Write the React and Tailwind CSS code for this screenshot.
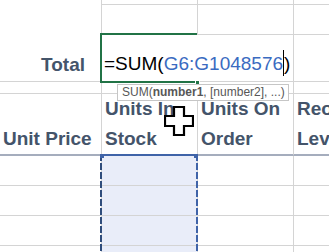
import React from "react";

const GRID = "border-r border-b border-[#d4d4d4]";
const HEAD = "border-r border-b-2 border-r-[#d4d4d4] border-b-[#a5adbd]";

const Cursor = () => (
  // fat white cross that Excel shows over cells
  <svg className="absolute left-[164px] top-[106px]" width="30" height="30" viewBox="0 0 30 30">
    <path
      d="M10 1H20V10H29V20H20V29H10V20H1V10H10Z"
      fill="#fff"
      stroke="#000"
      strokeWidth="2.2"
      strokeLinejoin="miter"
    />
  </svg>
);

const Marquee = () => (
  // dashed copy/reference outline around column G
  <svg className="absolute left-[100px] top-[154px]" width="98" height="100">
    <line x1="0" y1="1" x2="98" y2="1" stroke="#3f63a8" strokeWidth="2" />
    <line x1="1" y1="0" x2="1" y2="100" stroke="#2f4d7c" strokeWidth="2" strokeDasharray="7 2" />
    <line x1="97" y1="0" x2="97" y2="100" stroke="#3f63a8" strokeWidth="2" strokeDasharray="7 2" />
    <rect x="0" y="0" width="4" height="4" fill="#3f63a8" />
    <rect x="94" y="0" width="4" height="4" fill="#3f63a8" />
  </svg>
);

const App = () => {
  const headers = [
    { text: "Unit Price", cls: "justify-end" },
    { text: "Units In Stock", cls: "" },
    { text: "Units On Order", cls: "" },
    { text: "Reorder Level", cls: "" },
  ];

  return (
    <div
      className="relative w-[329px] h-[252px] overflow-hidden bg-white text-[#44546a]"
      style={{ fontFamily: '"Liberation Sans", Arial, sans-serif' }}
    >
      <div className="grid grid-cols-[102px_96px_96px_96px] grid-rows-[5px_30px_47px_12px_62px_30px_30px_30px_30px]">
        {/* top rows */}
        <div className={`row-span-3 ${GRID} flex items-end justify-end pb-[5px] pr-[16px]`}>
          <span className="text-[19px] leading-[22px] font-bold">Total</span>
        </div>
        <div className={GRID} />
        <div className={GRID} />
        <div className={GRID} />
        <div className={GRID} />
        <div className={GRID} />
        <div className={GRID} />

        {/* formula row */}
        <div className={`col-span-2 ${GRID} flex items-end pb-[5px] pl-[2px] whitespace-nowrap`}>
          <span className="text-[19px] leading-[22px] text-black">
            =SUM(<span className="text-[#3a6bc1]">G6:G1048576</span>
            <span className="inline-block w-px h-[26px] bg-black align-[-6px]" />)
          </span>
        </div>
        <div className={GRID} />

        {/* spacer row */}
        <div className={GRID} />
        <div className={GRID} />
        <div className={GRID} />
        <div className={GRID} />

        {/* header row */}
        {headers.map((h) => (
          <div key={h.text} className={`${HEAD} flex flex-col ${h.cls} px-[3px] overflow-hidden`}>
            <span className="text-[19px] leading-[30px] font-bold whitespace-normal w-[140px]">
              {h.text === "Reorder Level" ? (
                <>
                  Reorder
                  <br />
                  Level
                </>
              ) : h.text === "Unit Price" ? (
                "Unit Price"
              ) : (
                <span className="block w-[90px]">{h.text}</span>
              )}
            </span>
          </div>
        ))}

        {/* data rows */}
        {[0, 1, 2, 3].map((r) => (
          <React.Fragment key={r}>
            <div className={GRID} />
            <div className={`${GRID} bg-[#e9edf9]`} />
            <div className={GRID} />
            <div className={GRID} />
          </React.Fragment>
        ))}
      </div>

      {/* active cell outline (edit mode, right side open) */}
      <div className="absolute left-[100px] top-[33px] w-[97px] h-[50px] border-2 border-r-0 border-[#217346]" />
      <div className="absolute left-[195px] top-[80px] w-[5px] h-[5px] bg-[#217346] border border-white" />

      {/* function tooltip */}
      <div className="absolute left-[117px] top-[84px] w-[172px] h-[17px] bg-white border border-[#c6c6c6] pl-[4px] text-[12px] leading-[15px] text-[#575757] whitespace-nowrap">
        SUM(<span className="font-bold">number1</span>, [number2], ...)
      </div>

      <Marquee />
      <Cursor />
    </div>
  );
};

export default App;
